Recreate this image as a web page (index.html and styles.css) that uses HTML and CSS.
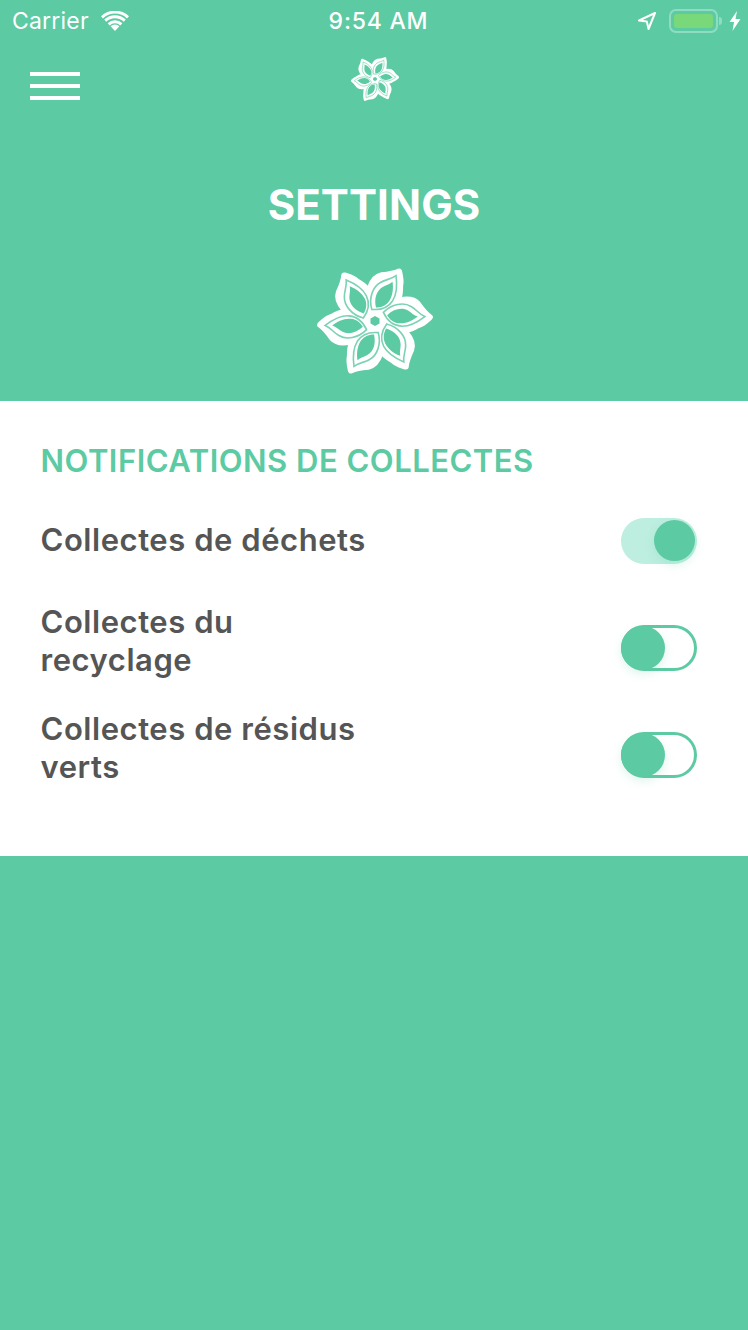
FILE: index.html
```html
<!DOCTYPE html>
<html lang="fr">
<head>
  <meta charset="UTF-8">
  <title>Settings</title>
  <link rel="stylesheet" href="styles.css">
</head>
<body>

  <svg class="defs" width="0" height="0">
    <defs>
      <path id="petal" d="M0,0 L-19,-27 C-20,-35 -18,-41 -14,-44 C-9,-47 -4,-50 0,-55 C3,-51 6,-48 7,-43 C9,-39 11,-35 11,-31 Z" />
      <path id="contour" d="M-8,-9 C-16,-18 -17,-30 -12,-37 C-9,-42 -4,-44 -1,-50 C3,-44 8,-36 7,-26 C6,-18 0,-12 -8,-9 Z" />
      <path id="leaf" d="M-5,-12.5 C-11,-20 -12,-28 -8,-34 C-6,-37 -3,-39 -1.5,-43 C2,-38 5,-31 4,-24 C3,-18 -1,-14.5 -5,-12.5 Z" />
      <g id="flower">
        <g class="flower-body">
          <use href="#petal" transform="rotate(26)" />
          <use href="#petal" transform="rotate(86)" />
          <use href="#petal" transform="rotate(146)" />
          <use href="#petal" transform="rotate(206)" />
          <use href="#petal" transform="rotate(266)" />
          <use href="#petal" transform="rotate(326)" />
          <circle r="14" />
        </g>
        <g class="flower-contours">
          <use href="#contour" transform="rotate(26)" />
          <use href="#contour" transform="rotate(86)" />
          <use href="#contour" transform="rotate(146)" />
          <use href="#contour" transform="rotate(206)" />
          <use href="#contour" transform="rotate(266)" />
          <use href="#contour" transform="rotate(326)" />
        </g>
        <g class="flower-holes">
          <use href="#leaf" transform="rotate(26)" />
          <use href="#leaf" transform="rotate(86)" />
          <use href="#leaf" transform="rotate(146)" />
          <use href="#leaf" transform="rotate(206)" />
          <use href="#leaf" transform="rotate(266)" />
          <use href="#leaf" transform="rotate(326)" />
          <polygon points="0,-5 4.5,-2.5 4.5,2.5 0,5 -4.5,2.5 -4.5,-2.5" />
        </g>
      </g>
    </defs>
  </svg>

  <header class="top">
    <div class="status-bar">
      <div class="status-left">
        <span>Carrier</span>
        <svg class="wifi" viewBox="0 0 28 20" width="28" height="20">
          <path d="M14,20 L9.6,15.2 A6.4,6.4 0 0 1 18.4,15.2 Z" />
          <path d="M6.6,12.2 A10.6,10.6 0 0 1 21.4,12.2 L19.3,14.4 A7.6,7.6 0 0 0 8.7,14.4 Z" />
          <path d="M3.2,8.6 A15.4,15.4 0 0 1 24.8,8.6 L22.8,10.8 A12.4,12.4 0 0 0 5.2,10.8 Z" />
          <path d="M0,5.3 A20,20 0 0 1 28,5.3 L26,7.4 A17,17 0 0 0 2,7.4 Z" />
        </svg>
      </div>
      <div class="status-time">9:54 AM</div>
      <div class="status-right">
        <svg class="arrow" viewBox="0 0 18 18" width="18" height="18">
          <path d="M17,1 L1,8.5 L8.8,9.4 L10.5,17 Z" />
        </svg>
        <div class="battery"><div class="battery-level"></div></div>
        <div class="battery-nub"></div>
        <svg class="bolt" viewBox="0 0 12 20" width="12" height="20">
          <path d="M8,0 L0.5,11 L5,11 L3.5,20 L11.5,8 L6.5,8 Z" />
        </svg>
      </div>
    </div>

    <nav class="nav">
      <div class="burger"><span></span><span></span><span></span></div>
      <svg class="logo-small" viewBox="-60 -60 120 120" width="50" height="50">
        <use href="#flower" />
      </svg>
    </nav>

    <h1 class="page-title">SETTINGS</h1>
    <svg class="logo-big" viewBox="-60 -60 120 120" width="120" height="120">
      <use href="#flower" />
    </svg>
  </header>

  <section class="panel">
    <h2 class="panel-title">NOTIFICATIONS DE COLLECTES</h2>

    <div class="row">
      <span class="row-label single">Collectes de déchets</span>
      <div class="toggle on"><div class="thumb"></div></div>
    </div>
    <div class="row">
      <span class="row-label wrapped">Collectes du recyclage</span>
      <div class="toggle"><div class="thumb"></div></div>
    </div>
    <div class="row">
      <span class="row-label wrapped">Collectes de résidus verts</span>
      <div class="toggle"><div class="thumb"></div></div>
    </div>
  </section>

</body>
</html>
```

FILE: styles.css
```css
body {
  margin: 0;
  height: 1330px;
  overflow: hidden;
  background-color: #5ccaa2;
  font-family: Inter, "Noto Sans", sans-serif;
  color: #fff;
}
.defs {
  display: block;
  height: 0;
}
.flower-body {
  fill: #fff;
  stroke: #fff;
  stroke-width: 6;
  stroke-linejoin: round;
}
.flower-contours {
  fill: #fff;
  stroke: #7bd3b4;
  stroke-width: 1.6;
}
.flower-holes {
  fill: #5ccaa2;
}

.top {
  height: 401px;
  display: flex;
  flex-direction: column;
  align-items: center;
}
.status-bar {
  box-sizing: border-box;
  width: 100%;
  height: 41px;
  padding: 0 3px 0 12px;
  display: grid;
  grid-template-columns: 1fr auto 1fr;
  align-items: center;
  font-size: 23px;
}
.status-left {
  display: flex;
  align-items: center;
  gap: 12px;
  letter-spacing: 0.2px;
}
.status-time {
  font-weight: 500;
  letter-spacing: 0.8px;
}
.status-right {
  display: flex;
  align-items: center;
  justify-content: flex-end;
  padding-right: 4px;
}
.wifi, .arrow, .bolt {
  fill: #fff;
  display: block;
}
.arrow {
  fill: none;
  stroke: #fff;
  stroke-width: 2;
  stroke-linejoin: round;
  margin-right: 13px;
}
.battery {
  box-sizing: border-box;
  width: 49px;
  height: 24px;
  padding: 3px;
  border: 2px solid #8fdcc3;
  border-radius: 7px;
}
.battery-level {
  height: 100%;
  border-radius: 3px;
  background-color: #78d87a;
}
.battery-nub {
  width: 3px;
  height: 8px;
  margin-left: 1px;
  margin-right: 7px;
  border-radius: 0 3px 3px 0;
  background-color: #8fdcc3;
}

.nav {
  box-sizing: border-box;
  width: 100%;
  height: 76px;
  padding-left: 2px;
  display: grid;
  grid-template-columns: 1fr auto 1fr;
  align-items: start;
}
.burger {
  width: 50px;
  margin-left: 28px;
  padding-top: 31px;
  display: flex;
  flex-direction: column;
  gap: 8px;
}
.burger span {
  display: block;
  height: 4px;
  background-color: #fff;
}
.logo-small {
  display: block;
  margin-top: 13px;
}
.page-title {
  margin: 61px 0 0;
  font-size: 42px;
  line-height: 54px;
  font-weight: 700;
  letter-spacing: 0.1px;
}
.logo-big {
  display: block;
  margin: 29px 0 0 2px;
}

.panel {
  box-sizing: border-box;
  height: 455px;
  padding: 41px 51px 0 40.5px;
  background-color: #fff;
}
.panel-title {
  margin: 0 0 7px;
  font-size: 31px;
  line-height: 38px;
  font-weight: 600;
  letter-spacing: 0.5px;
  color: #5ccaa2;
}
.row {
  height: 107px;
  display: flex;
  align-items: center;
  justify-content: space-between;
}
.row-label {
  width: 330px;
  font-size: 31px;
  line-height: 38px;
  font-weight: 600;
  letter-spacing: 0.55px;
  color: #555;
}
.row-label.single {
  margin-bottom: 2px;
}
.row-label.wrapped {
  margin-bottom: 14px;
}
.toggle {
  box-sizing: border-box;
  width: 76px;
  height: 46px;
  border: 3px solid #5ccaa2;
  border-radius: 23px;
  display: flex;
  align-items: center;
  justify-content: flex-start;
  background-color: #fff;
}
.toggle .thumb {
  width: 44px;
  height: 44px;
  margin: -3px;
  border-radius: 50%;
  background-color: #5ccaa2;
  box-shadow: 0 4px 10px rgba(92, 202, 162, 0.2);
}
.toggle.on {
  justify-content: flex-end;
  border: none;
  background-color: #bdeee0;
}
.toggle.on .thumb {
  width: 41px;
  height: 41px;
  margin: 0 2px 0 0;
}
```
